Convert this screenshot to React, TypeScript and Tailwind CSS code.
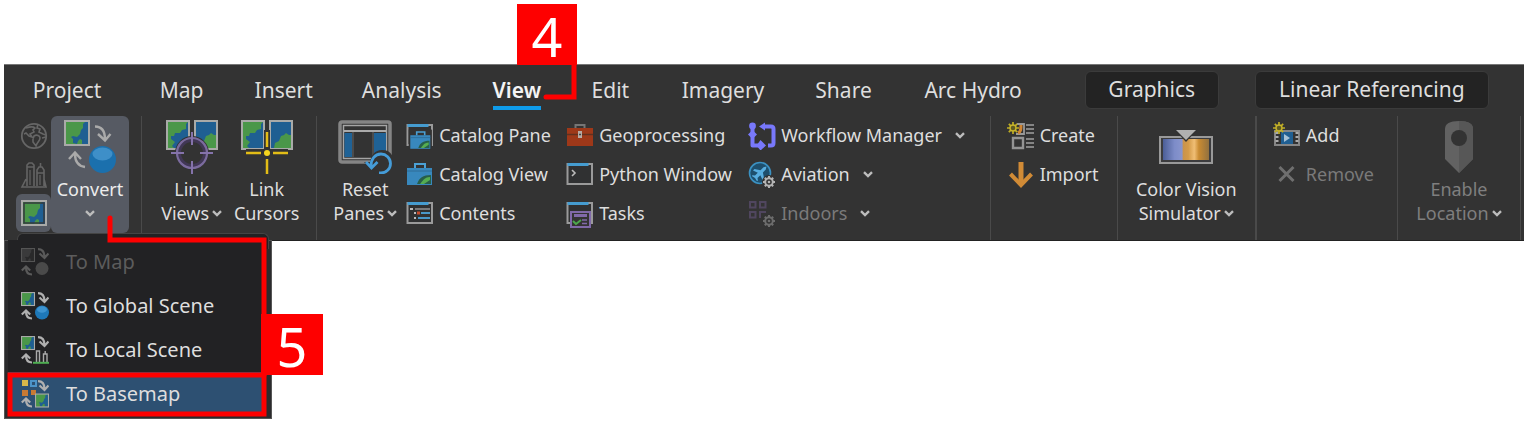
import type { ReactNode } from "react";

type IconProps = { children: ReactNode; className?: string; box: string };

function Svg({ children, className = "", box }: IconProps) {
  return (
    <svg viewBox={box} className={`shrink-0 ${className}`} fill="none" aria-hidden="true">
      {children}
    </svg>
  );
}

const Chevron = () => (
  <Svg box="0 0 10 7" className="h-[7px] w-[10px]">
    <path d="M1 1.2 5 5 9 1.2" stroke="#bdbdbd" strokeWidth="2.400" />
  </Svg>
);

/* A 26-unit map tile: land on the left, water on the right. */
function Tile({ muted = false }: { muted?: boolean }) {
  return (
    <>
      <rect x="1" y="1" width="24" height="24" fill={muted ? "#3a3a3b" : "#4a9749"} />
      <path
        d="M21 2h3v22h-6v-4l-2-1-2 2-1 3-4-1v-4l-2-2 2-1 4 1 3-3 1-4 2-2V4z"
        fill={muted ? "#29292a" : "#1f5f92"}
      />
      <rect x="1" y="1" width="24" height="24" stroke={muted ? "#555" : "#a9aaa8"} strokeWidth="2" />
    </>
  );
}

const ConvertIcon = () => (
  <Svg box="0 0 52 54" className="h-[54px] w-[52px]">
    <Tile />
    <g stroke="#aaa" strokeWidth="2.400">
      <path d="M31 6.500c7 0 10 4 10 13M34 14l7 6.500L46.500 14" />
      <path d="M21 47c-7-1-10-5-10-13M5 39l6-6.500 6 6.500" />
    </g>
    <circle cx="38.500" cy="39.500" r="13.500" fill="#1b70ad" />
    <ellipse cx="38.500" cy="34" rx="10" ry="6.500" fill="#3e8fc8" />
  </Svg>
);

type MenuKind = "map" | "globe" | "local" | "base";

function MenuIcon({ kind }: { kind: MenuKind }) {
  const muted = kind === "map";
  return (
    <Svg box="0 0 28 28" className="h-[28px] w-[28px]">
      {kind === "base" ? (
        <>
          <rect x="1" y="0" width="6" height="6" fill="#d9b84a" />
          <rect x="10" y="1" width="5" height="5" stroke="#4c93c8" strokeWidth="2" />
          <rect x="1" y="10" width="6" height="6" fill="#c77a34" />
          <rect x="10" y="10" width="5" height="5" fill="#c77a34" />
        </>
      ) : (
        <g transform="scale(.54)">
          <Tile muted={muted} />
        </g>
      )}
      <g stroke={muted ? "#5a5a5a" : "#b0b0b0"} strokeWidth="2.200">
        <path d="M17 1.200c4 0 6.500 3 6.500 8M18.500 5.500l5 4.500 4-4.500" />
        <path d="M11 26.500c-4 0-6-2-6-7M.8 22.500 5 18.500 9.200 22.500" />
      </g>
      {muted && <circle cx="21" cy="20.500" r="6.500" fill="#4a4a4a" />}
      {kind === "globe" && (
        <>
          <circle cx="21" cy="20.500" r="7" fill="#1e78b8" />
          <ellipse cx="21" cy="17.500" rx="5" ry="3.200" fill="#3d93cf" />
        </>
      )}
      {kind === "local" && (
        <>
          <path d="M15.500 26V15h3v11M22.500 26v-8h3.500v8M24.200 18v-3" stroke="#aaa" strokeWidth="1.400" />
          <path d="M12 26.800h16" stroke="#4fae52" strokeWidth="2" />
        </>
      )}
      {kind === "base" && (
        <g transform="translate(14 13.500) scale(.54)">
          <Tile />
        </g>
      )}
    </Svg>
  );
}

const Globe = () => (
  <Svg box="0 0 28 28" className="size-[28px]">
    <circle cx="14" cy="14" r="12.200" stroke="#666" strokeWidth="1.800" />
    <path
      d="M6 6c3-1 7-2 9 0l-2 2 1 2-4 2 2 3-3-1-3-3-2 1M14 14c3-2 6 0 6 2 0 3-3 4-4 8l-3-4v-3zM18 2l-1 4 3 1-1 3 4 2 3 1M26 15l-4 1"
      stroke="#666"
      strokeWidth="1.600"
    />
  </Svg>
);

const Towers = () => (
  <Svg box="0 0 28 28" className="size-[28px]">
    <path d="M7 25V4l2-2h3l2 2v21M7 6h7M17 25V9l2-3h3l2 3v16M20.500 6V2M17 12h7M6 18l-4 8h24l-2-8" stroke="#646464" strokeWidth="1.600" />
    <path d="M10 9v15M20 14v10" stroke="#505050" strokeWidth="2" />
  </Svg>
);

const MapView = () => (
  <Svg box="0 0 26 26" className="size-[26px]">
    <Tile />
    <rect x="3" y="3" width="20" height="20" stroke="#353a3e" strokeWidth="1.500" />
  </Svg>
);

function TwinTiles() {
  return (
    <>
      <path d="M1 1h22v28H1z" fill="#4a9749" />
      <path d="M22 2v26H8l-2-2 3-4-4-3v-3h3l1-3h5l2-3 4-1V4z" fill="#1f5f92" />
      <path d="M1 1h22v28H1z" stroke="#a9aaa8" strokeWidth="2" />
      <path d="M29 1h22v28H29z" fill="#1f5f92" />
      <path d="M50 15v13H33l1-5 4-2 2-5 3-1 2-2 3 2z" fill="#4a9749" />
      <path d="M29 1h22v28H29z" stroke="#a9aaa8" strokeWidth="2" />
    </>
  );
}

const LinkViewsIcon = () => (
  <Svg box="0 0 52 54" className="h-[54px] w-[52px]">
    <TwinTiles />
    <circle cx="26" cy="33" r="17" fill="#333" />
    <circle cx="26" cy="33" r="13" stroke="#413755" strokeWidth="4" />
    <circle cx="26" cy="33" r="15" stroke="#7b6b9e" strokeWidth="2.200" />
    <path d="M26 12v13M26 41v13M5 33h13M34 33h13" stroke="#8573ab" strokeWidth="2" />
  </Svg>
);

const LinkCursorsIcon = () => (
  <Svg box="0 0 52 54" className="h-[54px] w-[52px]">
    <TwinTiles />
    <path d="M26 10v22M5 32h42" stroke="#333" strokeWidth="6" />
    <path d="M26 12v15M26 39v15M5 33h15M32 33h15" stroke="#e3bd17" strokeWidth="2.500" />
    <circle cx="26" cy="33" r="3" fill="#f5d51e" />
  </Svg>
);

const ResetIcon = () => (
  <Svg box="0 0 54 54" className="size-[54px]">
    <rect x="2" y="2" width="50" height="40" rx="2" fill="#333" stroke="#858585" strokeWidth="3.500" />
    <rect x="5.500" y="5.500" width="43" height="33" fill="#333" stroke="#a5a5a5" strokeWidth="1.500" />
    <path d="M6 11h42" stroke="#aaa" strokeWidth="2" />
    <path d="M6.500 13H14v24H6.500zM36 13h12v24H36z" fill="#1f6296" />
    <path d="M15 12v25M35 12v25" stroke="#666" />
    <path d="M26 42h6c1-7 5-12 12-12 6 0 10 3 11 8v16H38z" fill="#333" />
    <path d="M33 46c0-7 4-12 10-12 5 0 9.500 4 9.500 9.500S48 53 43 53h-2M28 42l5.500 6 6-6" stroke="#459cd8" strokeWidth="2.800" />
  </Svg>
);

const Frame = () => (
  <>
    <rect x="1.500" y="3" width="24.500" height="20" fill="#303132" stroke="#9a9a9a" strokeWidth="2" />
    <path d="M1.500 3.500h21" stroke="#459cd0" strokeWidth="3" />
  </>
);

const Case = () => (
  <>
    <path d="M1 9h25v17H1z" fill="#3888bd" />
    <path d="M9 9V5h10v4" stroke="#4ba0d4" strokeWidth="2" />
    <path d="M1 12h25" stroke="#2f6c96" />
    <path d="M11 25c2-6 6-9 14-9v9z" fill="#275f4a" />
    <path d="M14 25c2-2 4-7 10-7v3l-6 4z" fill="#55ad51" />
  </>
);

const CatalogPaneIcon = () => (
  <Svg box="0 0 28 28" className="size-[28px]">
    <Frame />
    <g transform="translate(3.500 6) scale(.8)">
      <path d="M-1 2h29v25H-1z" fill="#333" />
      <Case />
    </g>
  </Svg>
);
const CatalogViewIcon = () => (
  <Svg box="0 0 28 28" className="size-[28px]">
    <g transform="translate(0 -2)">
      <Case />
    </g>
  </Svg>
);
const ContentsIcon = () => (
  <Svg box="0 0 28 28" className="size-[28px]">
    <Frame />
    <path d="M4 9h3M8 13h2M8 18h2" stroke="#bbb" strokeWidth="1.800" />
    <path d="M9 9h15" stroke="#8e8e8e" strokeWidth="1.600" />
    <path d="M11 13h3" stroke="#c64b2c" strokeWidth="3" />
    <path d="M15 13h9M12 18h12" stroke="#4998ca" strokeWidth="1.800" />
  </Svg>
);
const ToolboxIcon = () => (
  <Svg box="0 0 28 28" className="size-[28px]">
    <path d="M9.500 6V3h9v3" stroke="#757575" strokeWidth="2" />
    <path d="M1 6h26v18H1z" fill="#9e3819" />
    <path d="M1 12.500h26" stroke="#61301f" strokeWidth="1.500" />
    <rect x="12" y="9" width="4" height="7" fill="#b6aaa4" />
    <path d="M13 12.500h2" stroke="#444" strokeWidth="1.500" />
  </Svg>
);
const PythonIcon = () => (
  <Svg box="0 0 28 28" className="size-[28px]">
    <Frame />
    <path d="m6 9 3 3-3 3" stroke="#bbb" strokeWidth="1.600" />
  </Svg>
);
const TasksIcon = () => (
  <Svg box="0 0 28 28" className="size-[28px]">
    <Frame />
    <path d="M5 12h19v15H5z" fill="#333" stroke="#8069a9" strokeWidth="2" />
    <path d="M8 15.500h13" stroke="#8069a9" strokeWidth="3" />
    <path d="m7 21 3 3 5-4" stroke="#4ca64c" strokeWidth="2" />
    <path d="M16 20h5M16 23.500h5" stroke="#8069a9" strokeWidth="1.500" />
  </Svg>
);
const WorkflowIcon = () => (
  <Svg box="0 0 28 28" className="size-[28px]">
    <circle cx="4.500" cy="4" r="3.400" fill="#7878fb" />
    <path d="M4.500 4v19.500h8M16 4.500h7q2.500 0 2.500 2.500v14q0 2.500-2.500 2.500h-3" stroke="#7878fb" strokeWidth="4" strokeLinejoin="round" />
    <path d="M4.500 8 9 12.500 4.500 17 0 12.500z" fill="#7878fb" />
    <path d="m11 4.500 6-4v8zM12.500 18l5.500 5.500-5.500 5-4-5z" fill="#7878fb" />
  </Svg>
);
function Gear({ color }: { color: string }) {
  return (
    <>
      <circle cx="21" cy="21" r="7" fill="#333" />
      <circle cx="21" cy="21" r="3.800" stroke={color} strokeWidth="2" />
      <circle cx="21" cy="21" r="1.300" fill={color} />
      <path d="M21 15v2M21 25v2M15 21h2M25 21h2M16.800 16.800l1.500 1.500M23.700 23.700l1.500 1.500M16.800 25.200l1.500-1.500M23.700 18.300l1.500-1.500" stroke={color} strokeWidth="2" />
    </>
  );
}
const AviationIcon = () => (
  <Svg box="0 0 28 28" className="size-[28px]">
    <circle cx="12" cy="12" r="10.500" fill="#1e4f6d" stroke="#3b91c2" strokeWidth="1.600" />
    <path d="m18.500 5.500-3 .8-3 2.900L6.500 8 5 9.500l4.800 2.300-2.800 2.700-2.500-.3L3.800 15l3.200 2 2 3.200.9-.8-.4-2.500 2.800-2.700 2.300 4.800 1.500-1.500-1.200-6 2.900-3z" fill="#58aee0" />
    <Gear color="#b4b4b4" />
  </Svg>
);
const IndoorsIcon = () => (
  <Svg box="0 0 28 28" className="size-[28px]">
    <path d="M2 2h5.500v5.500H2zM12 2h5.500v5.500H12zM2 12h5.500v5.500H2zM12 18v-6h6" stroke="#50465f" strokeWidth="2" />
    <Gear color="#6c6c6c" />
  </Svg>
);
const Spark = () => (
  <>
    <path d="M6 0v12M0 6h12M1.800 1.800l8.400 8.400M10.200 1.800l-8.400 8.400" stroke="#bfae24" strokeWidth="1.700" />
    <circle cx="6" cy="6" r="3" fill="#5f5b22" stroke="#c9b52b" strokeWidth="1.400" />
  </>
);
const CreateIcon = () => (
  <Svg box="0 0 28 28" className="size-[28px]">
    <path d="M10 2h7v10H9" stroke="#999" strokeWidth="1.800" />
    <path d="M11 11c3-1 3-4 3-8" stroke="#d08534" strokeWidth="3" />
    <path d="M6 16h10v10H6z" stroke="#949494" strokeWidth="2.400" />
    <path d="M19 3h8M19 7h8M19 11h8M19 17h8M19 21h8M19 25h8" stroke="#858585" strokeWidth="2" />
    <Spark />
  </Svg>
);
const ImportIcon = () => (
  <Svg box="0 0 28 28" className="size-[28px]">
    <path d="M14 1v22" stroke="#d18b36" strokeWidth="5" />
    <path d="m3.500 13 10.500 11L24.500 13" stroke="#d18b36" strokeWidth="4" />
  </Svg>
);
const AddIcon = () => (
  <Svg box="0 0 28 28" className="size-[28px]">
    <path d="M2 9h24v14H2z" fill="#333" stroke="#868686" strokeWidth="2" />
    <path d="M4 10v12M24 10v12" stroke="#aaa" strokeWidth="3" strokeDasharray="2 2" />
    <path d="M8 10h12v12H8z" fill="#205f92" />
    <path d="m11 12 6 4-6 4z" fill="#a7c1d5" />
    <Spark />
  </Svg>
);
const RemoveIcon = () => (
  <Svg box="0 0 28 28" className="size-[28px]">
    <path d="m6.500 6 14 14M20.500 6l-14 14" stroke="#6f6f6f" strokeWidth="3" />
  </Svg>
);
const VisionIcon = () => (
  <Svg box="0 0 54 54" className="size-[54px]">
    <defs>
      <linearGradient id="vision">
        <stop offset="0" stopColor="#4b5e96" />
        <stop offset=".25" stopColor="#7d8cc8" />
        <stop offset=".42" stopColor="#8996cd" />
        <stop offset=".43" stopColor="#c8924c" />
        <stop offset=".55" stopColor="#d39a48" />
        <stop offset=".68" stopColor="#f0be75" />
        <stop offset=".78" stopColor="#c98b32" />
        <stop offset="1" stopColor="#92713f" />
      </linearGradient>
    </defs>
    <rect x="1" y="17" width="52" height="26" fill="#3c3c3e" stroke="#999" strokeWidth="2" />
    <rect x="4" y="19" width="46" height="21" fill="url(#vision)" />
    <path d="M15 9h24L27 22z" fill="#333" />
    <path d="M17 10h20L27 20z" fill="#b0b0b0" />
  </Svg>
);
const LocationIcon = () => (
  <Svg box="0 0 54 54" className="size-[54px]">
    <path d="M13 9q0-8 14-8t14 8v30L27 53 13 39z" fill="#626262" />
    <path d="M27 1q14 0 14 8v30L27 53z" fill="#575757" />
    <circle cx="27" cy="18" r="8" fill="#333" />
  </Svg>
);

function BigButton({
  icon,
  top,
  bottom,
  menu = false,
  disabled = false,
  className = "",
}: {
  icon: ReactNode;
  top: string;
  bottom: string;
  menu?: boolean;
  disabled?: boolean;
  className?: string;
}) {
  return (
    <button
      disabled={disabled}
      className={`flex flex-col items-center whitespace-nowrap pt-1 text-[18px] leading-6 ${disabled ? "text-[#7f7f7f]" : "text-[#dedede]"} ${className}`}
    >
      <span className="flex h-[57px] items-start">{icon}</span>
      <span>{top}</span>
      <span className="flex items-center gap-[3px]">
        {bottom}
        {menu && <Chevron />}
      </span>
    </button>
  );
}

function Command({
  icon,
  label,
  menu = false,
  disabled = false,
}: {
  icon: ReactNode;
  label: string;
  menu?: boolean;
  disabled?: boolean;
}) {
  return (
    <button
      disabled={disabled}
      className={`flex h-[39px] items-center gap-[5px] whitespace-nowrap text-[18px] ${disabled ? "text-[#7a7a7a]" : "text-[#dedede]"}`}
    >
      {icon}
      <span>{label}</span>
      {menu && (
        <span className="ml-2 flex">
          <Chevron />
        </span>
      )}
    </button>
  );
}

const tabs = ["Project", "Map", "Insert", "Analysis", "View", "Edit", "Imagery", "Share", "Arc Hydro"];

const menuItems: { kind: MenuKind; label: string }[] = [
  { kind: "map", label: "To Map" },
  { kind: "globe", label: "To Global Scene" },
  { kind: "local", label: "To Local Scene" },
  { kind: "base", label: "To Basemap" },
];

export default function App() {
  return (
    <div className="relative min-h-screen bg-white px-1 pt-16 font-['Noto_Sans','Open_Sans',sans-serif]">
      <header className="border-t border-[#777] bg-[#333]">
        <nav
          aria-label="Ribbon tabs"
          className="grid grid-cols-[126fr_103fr_101fr_135fr_95fr_92fr_133fr_108fr_151fr_36fr_134fr_36fr_234fr_35fr] pt-[6px] text-[21px] text-[#dedede]"
        >
          {tabs.map((tab) => (
            <button key={tab} className="flex h-[39px] min-w-0 justify-center whitespace-nowrap">
              <span
                className={`h-full leading-[38px] ${tab === "View" ? "border-b-4 border-[#0f9bea] font-semibold text-[#f4f4f4]" : ""}`}
              >
                {tab}
              </span>
            </button>
          ))}
          <button className="col-start-11 h-[38px] rounded-md border border-[#3b3b3b] bg-[#232323]">Graphics</button>
          <button className="col-start-13 h-[38px] whitespace-nowrap rounded-md border border-[#3b3b3b] bg-[#232323]">
            Linear Referencing
          </button>
        </nav>

        <div className="grid grid-cols-[138fr_175fr_673fr_127fr_139fr_141fr_126fr] border-b border-[#222] pt-[6px]">
          <section className="flex border-r border-[#4a4a4a] pl-3">
            <div className="flex w-[35px] flex-col items-center">
              <button aria-label="Global scene" className="flex h-[39px] items-center">
                <Globe />
              </button>
              <button aria-label="Local scene" className="flex h-[39px] items-center">
                <Towers />
              </button>
              <button
                aria-label="Map"
                className="flex h-[38px] w-full items-center justify-center rounded-md bg-[#565a63]"
              >
                <MapView />
              </button>
            </div>
            <button
              aria-expanded="true"
              className="flex h-[117px] w-[78px] flex-col items-center rounded-md bg-[#565a63] pt-1 text-[18px] leading-6 text-[#ececec]"
            >
              <span className="flex h-[57px] items-start">
                <ConvertIcon />
              </span>
              <span>Convert</span>
              <span className="flex h-6 items-center">
                <Chevron />
              </span>
            </button>
          </section>

          <section className="flex justify-center border-r border-[#4a4a4a]">
            <BigButton className="w-[75px]" icon={<LinkViewsIcon />} top="Link" bottom="Views" menu />
            <BigButton className="w-[75px]" icon={<LinkCursorsIcon />} top="Link" bottom="Cursors" />
          </section>

          <section className="flex border-r border-[#4a4a4a] pl-2">
            <BigButton className="w-20" icon={<ResetIcon />} top="Reset" bottom="Panes" menu />
            <div className="ml-px w-40">
              <Command icon={<CatalogPaneIcon />} label="Catalog Pane" />
              <Command icon={<CatalogViewIcon />} label="Catalog View" />
              <Command icon={<ContentsIcon />} label="Contents" />
            </div>
            <div className="w-[182px]">
              <Command icon={<ToolboxIcon />} label="Geoprocessing" />
              <Command icon={<PythonIcon />} label="Python Window" />
              <Command icon={<TasksIcon />} label="Tasks" />
            </div>
            <div>
              <Command icon={<WorkflowIcon />} label="Workflow Manager" menu />
              <Command icon={<AviationIcon />} label="Aviation" menu />
              <Command icon={<IndoorsIcon />} label="Indoors" menu disabled />
            </div>
          </section>

          <section className="border-r border-[#4a4a4a] pl-4">
            <Command icon={<CreateIcon />} label="Create" />
            <Command icon={<ImportIcon />} label="Import" />
          </section>

          <section className="flex justify-center border-r-2 border-[#4a4a4a]">
            <BigButton icon={<VisionIcon />} top="Color Vision" bottom="Simulator" menu />
          </section>

          <section className="border-r border-[#4a4a4a] pl-4">
            <Command icon={<AddIcon />} label="Add" />
            <Command icon={<RemoveIcon />} label="Remove" disabled />
          </section>

          <section className="mr-[3px] flex h-[124px] justify-center border-r border-[#4a4a4a]">
            <BigButton icon={<LocationIcon />} top="Enable" bottom="Location" menu disabled />
          </section>
        </div>
      </header>

      <div className="absolute left-1 top-60 h-[179px] w-[268px] border border-[#555] bg-[#2b2b2d]" />
      <div className="absolute left-[17px] top-[233px] h-4 w-[252px] rounded-t-md border border-b-0 border-[#444] bg-[#222224]" />
      <div role="menu" className="absolute left-2 top-60 w-[258px] bg-[#222224]">
        {menuItems.map(({ kind, label }) => (
          <button
            key={kind}
            role="menuitem"
            disabled={kind === "map"}
            className={`flex h-11 w-full items-center gap-[17px] whitespace-nowrap pl-[13px] text-[20px] ${kind === "map" ? "text-[#5c5c5c]" : "text-[#dedede]"} ${kind === "base" ? "bg-[#2d5072]" : ""}`}
          >
            <MenuIcon kind={kind} />
            {label}
          </button>
        ))}
      </div>

      <svg
        className="pointer-events-none absolute left-0 top-0 h-[425px] w-[600px]"
        viewBox="0 0 600 425"
        fill="none"
        stroke="#fe0000"
        strokeWidth="5"
        strokeLinecap="round"
        aria-hidden="true"
      >
        <path d="M574 60V97H546" />
        <path d="M110 218v22h154v135" />
        <path d="M10 375h254v39H10z" />
      </svg>
      <div className="absolute left-[517px] top-1 flex h-[61px] w-[60px] items-center justify-center bg-[#fe0000] pt-[3px] text-[54px] leading-none text-white">
        4
      </div>
      <div className="absolute left-[261px] top-[314px] flex h-[61px] w-[62px] items-center justify-center bg-[#fe0000] pt-[3px] text-[54px] leading-none text-white">
        5
      </div>
    </div>
  );
}
